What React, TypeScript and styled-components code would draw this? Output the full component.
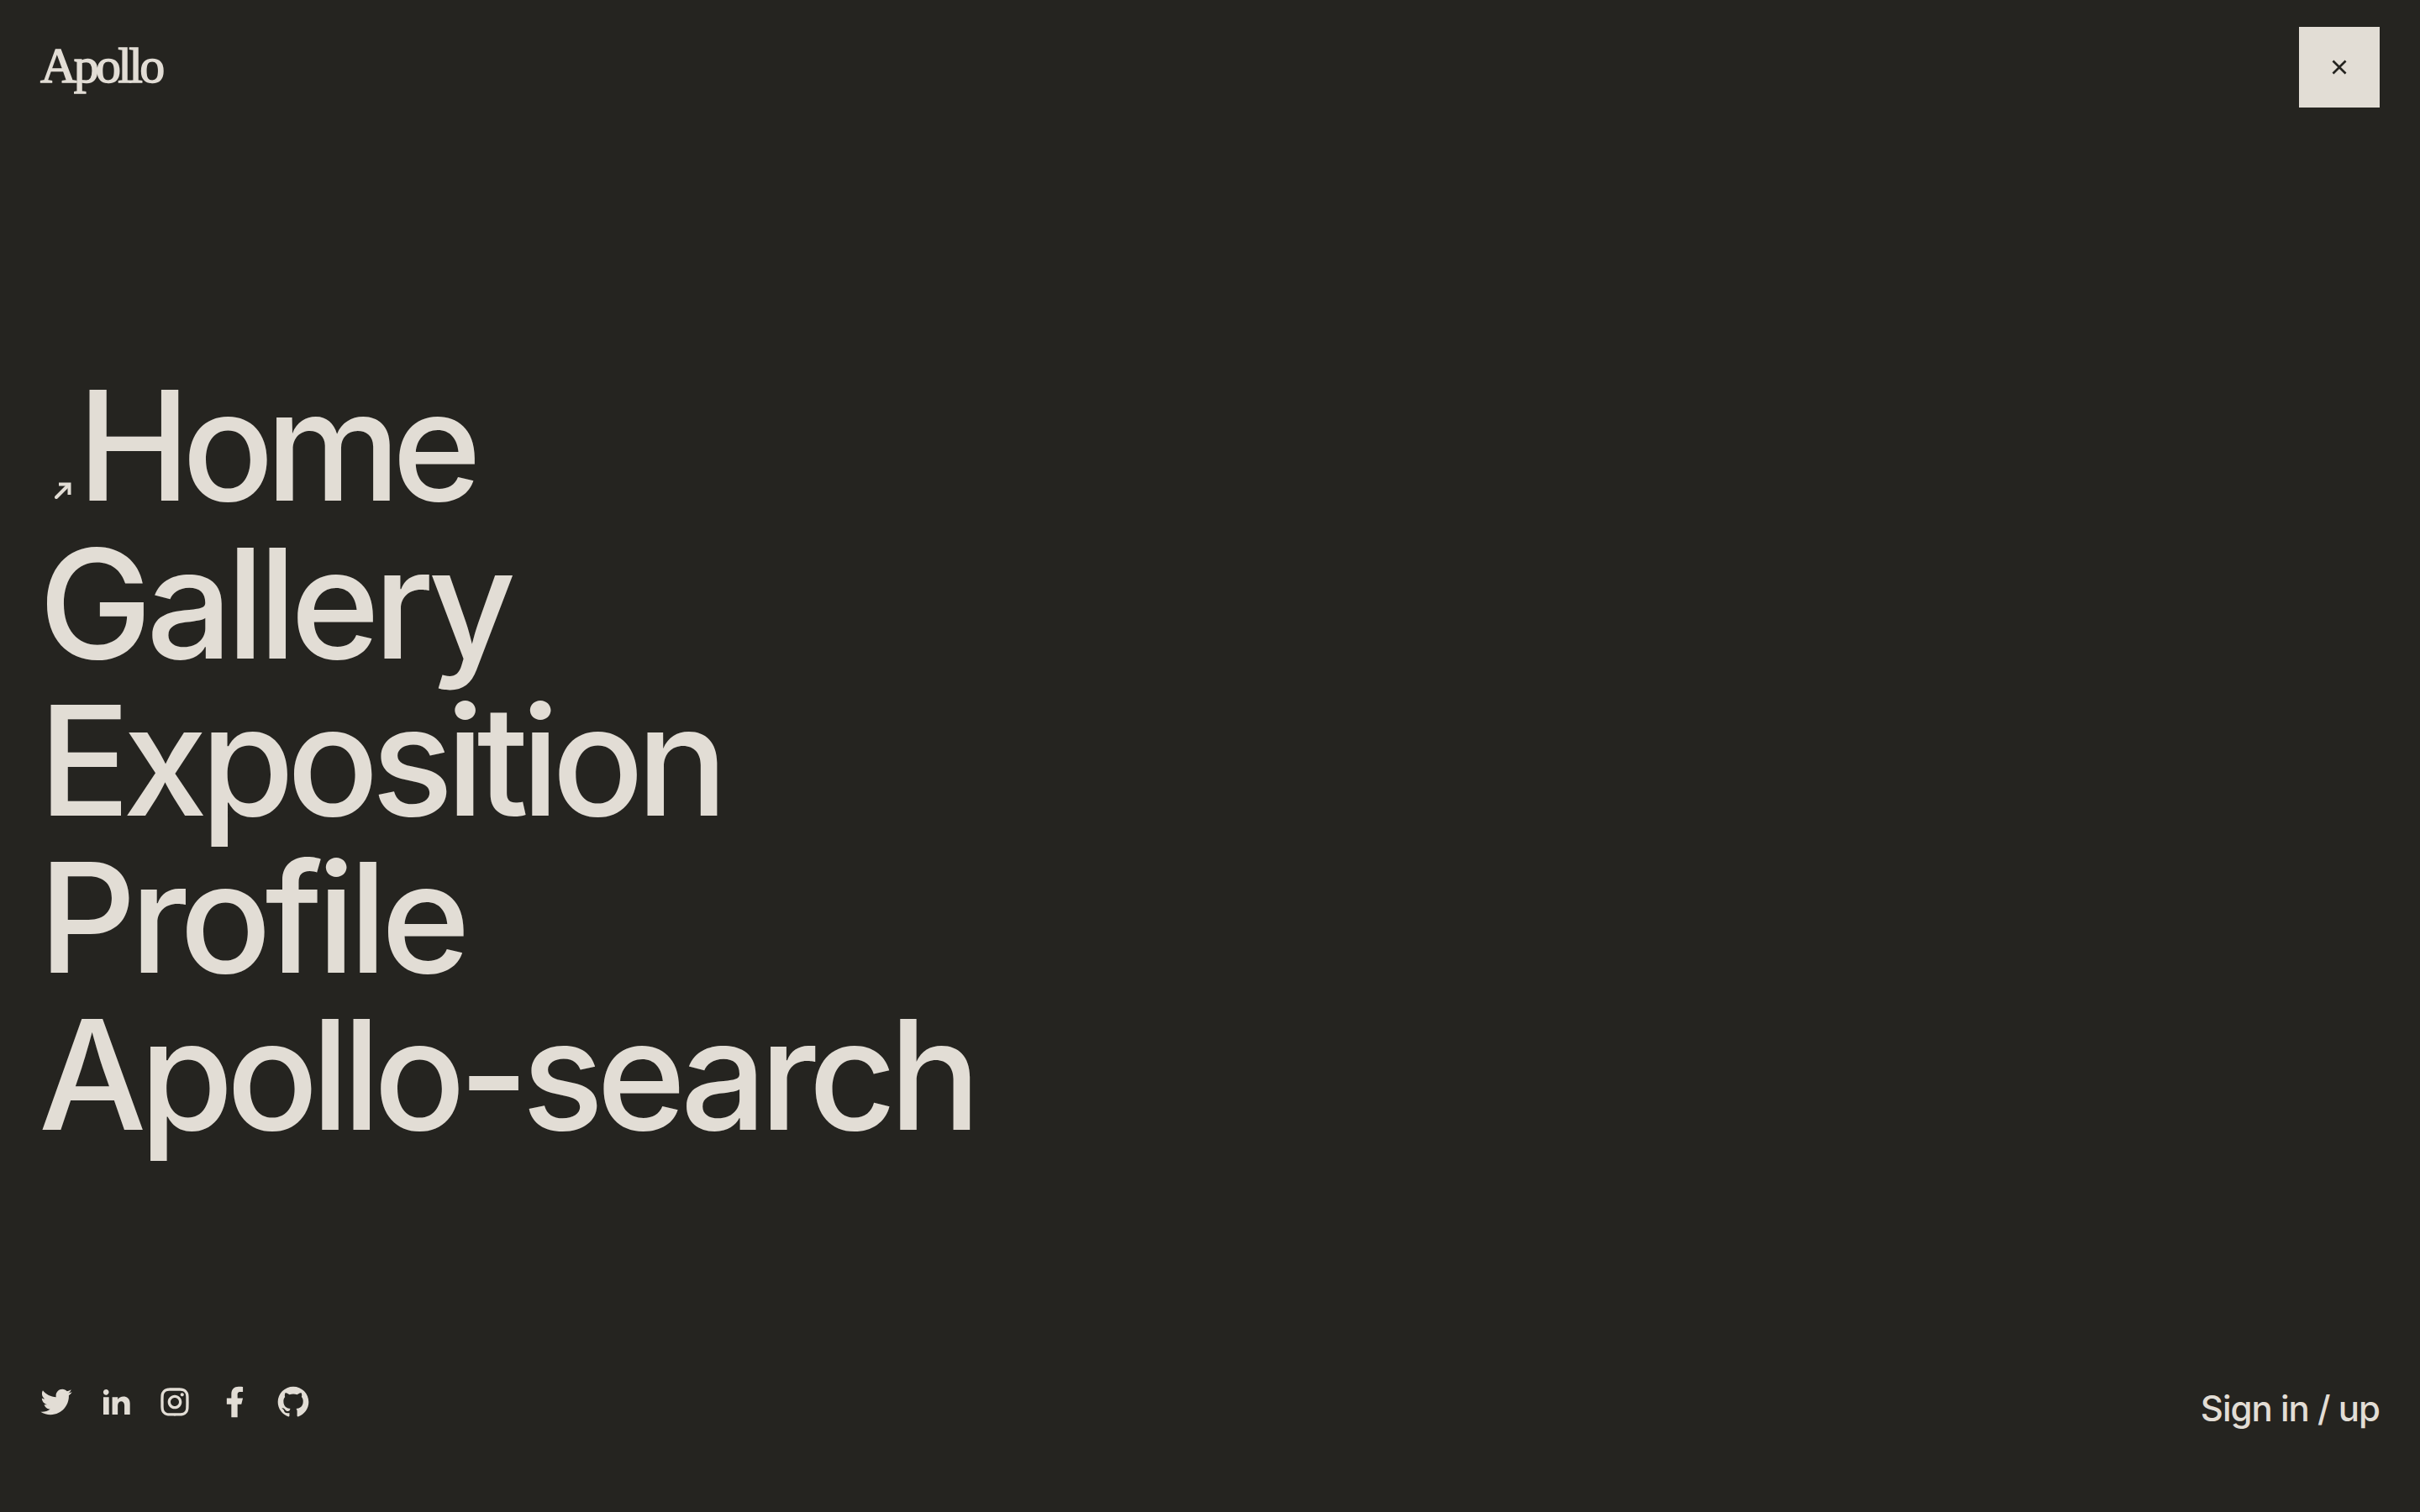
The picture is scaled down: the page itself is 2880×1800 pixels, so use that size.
import React from "react";
import styled, { createGlobalStyle } from "styled-components";
import { RiTwitterFill, RiLinkedinFill, RiInstagramLine, RiFacebookFill, RiGithubFill, RiCloseLine } from "react-icons/ri";

const Global = createGlobalStyle`
  html, body { margin: 0; padding: 0; background: #252420; }
`;

const Page = styled.div`
  box-sizing: border-box;
  width: 2880px;
  height: 1800px;
  background: #252420;
  color: #e2ddd5;
  padding: 32px 48px 93px;
  display: flex;
  flex-direction: column;
  font-family: Inter, "Liberation Sans", sans-serif;
  overflow: hidden;
`;

const Header = styled.header`
  display: flex;
  justify-content: space-between;
  align-items: flex-start;
  height: 96px;
`;

const Logo = styled.div`
  font-family: "Liberation Serif", serif;
  font-size: 60px;
  line-height: 93px;
  letter-spacing: -3.7px;
  -webkit-text-stroke: 1.4px #e2ddd5;
`;

const CloseButton = styled.button`
  width: 96px;
  height: 96px;
  border: 0;
  padding: 0;
  background: #e2ddd5;
  color: #252420;
  display: flex;
  align-items: center;
  justify-content: center;
`;

const Nav = styled.nav`
  display: flex;
  flex-direction: column;
  margin-top: 309px;
  margin-left: -2px;
`;

const NavItem = styled.a<{ $tracking: number }>`
  display: flex;
  align-items: flex-end;
  height: 187.3px;
  font-size: 181px;
  font-weight: 450;
  line-height: 187px;
  letter-spacing: ${(p) => p.$tracking}px;
  white-space: nowrap;
`;

const Marker = styled.svg`
  width: 20px;
  height: 20px;
  margin: 0 7px 30px 19px;
  flex: none;
`;

const Footer = styled.footer`
  margin-top: auto;
  display: flex;
  justify-content: space-between;
  align-items: flex-start;
`;

const Socials = styled.div`
  display: flex;
  gap: 26.5px;
  align-items: center;
  margin-left: -3px;
`;

const Social = styled.a`
  width: 44px;
  height: 44px;
  display: flex;
  align-items: center;
  justify-content: center;
`;

const SignIn = styled.a`
  font-size: 42px;
  line-height: 60px;
  font-weight: 500;
  letter-spacing: -1px;
`;

const items = [
  { label: "Gallery", tracking: -7.4 },
  { label: "Exposition", tracking: -8.8 },
  { label: "Profile", tracking: -7.5 },
  { label: "Apollo-search", tracking: -8.4 },
];

export default function App() {
  return (
    <Page>
      <Global />
      <Header>
        <Logo>Apollo</Logo>
        <CloseButton aria-label="Close"><RiCloseLine size={32} /></CloseButton>
      </Header>
      <Nav>
        <NavItem $tracking={-10}>
          <Marker viewBox="0 0 20 20" fill="none" stroke="currentColor" strokeWidth="4" strokeLinecap="round">
            <path d="M2 18 L16 4" />
            <path d="M5 2.5 H17.5 V15" strokeLinecap="butt" />
          </Marker>
          Home
        </NavItem>
        {items.map((t) => <NavItem key={t.label} $tracking={t.tracking}>{t.label}</NavItem>)}
      </Nav>
      <Footer>
        <Socials>
          <Social><RiTwitterFill size={44} /></Social>
          <Social><RiLinkedinFill size={40} /></Social>
          <Social><RiInstagramLine size={40} /></Social>
          <Social><RiFacebookFill size={44} /></Social>
          <Social><RiGithubFill size={44} /></Social>
        </Socials>
        <SignIn>Sign in / up</SignIn>
      </Footer>
    </Page>
  );
}
